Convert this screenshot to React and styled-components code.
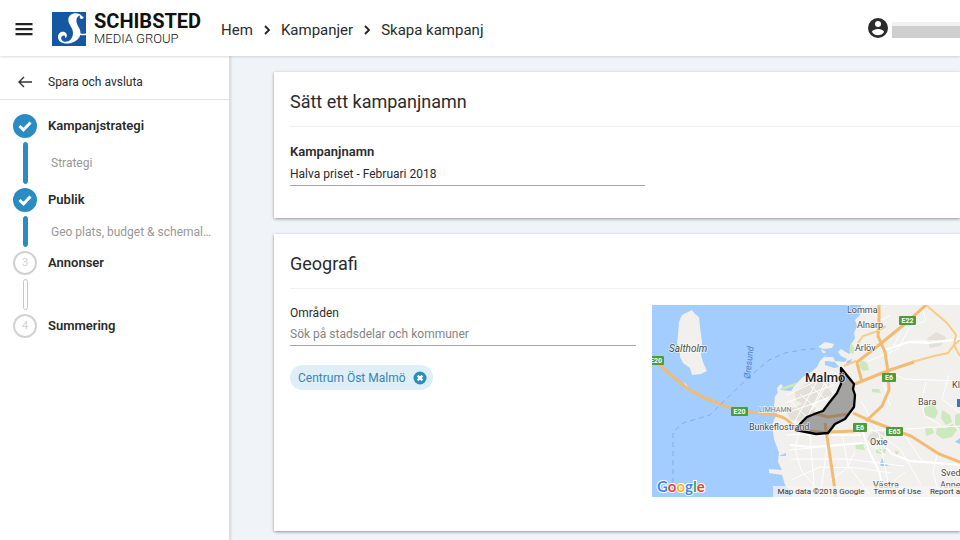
import React, { useState } from "react";
import styled, { createGlobalStyle } from "styled-components";

const Global = createGlobalStyle`
  * { box-sizing: border-box; }
  body { margin: 0; background: #f0f4f8; color: #2b2b2b; font: 12px/16px Roboto, "Liberation Sans", sans-serif; }
  button, input { font: inherit; color: inherit; }
  a { color: inherit; text-decoration: none; }
`;

const Page = styled.div`
  min-height: 100vh;
  display: flex;
  flex-direction: column;
  overflow-x: hidden;
`;

const TopBar = styled.header`
  height: 56px;
  flex: none;
  display: flex;
  align-items: center;
  background: #fff;
  padding-left: 12px;
  box-shadow: 0 1px 2px rgba(0, 0, 0, 0.14);
  z-index: 2;
`;

const IconButton = styled.button`
  display: flex;
  padding: 0;
  border: 0;
  background: none;
  cursor: pointer;
`;

const Brand = styled.a`
  display: flex;
  align-items: center;
  gap: 8px;
  margin-left: 16px;
  padding-top: 2px;
`;

const BrandText = styled.span`
  display: flex;
  flex-direction: column;
  color: #111;
`;

const BrandName = styled.strong`
  font-size: 20px;
  line-height: 20px;
  font-weight: 700;
`;

const BrandSub = styled.span`
  font-size: 13px;
  line-height: 16px;
  font-weight: 300;
`;

const Crumbs = styled.nav`
  display: flex;
  align-items: center;
  gap: 10px;
  margin-left: 20px;
  padding-top: 4px;
  font-size: 15px;
  line-height: 20px;
`;

const Account = styled.div`
  display: flex;
  align-items: center;
  gap: 4px;
  margin-left: auto;
`;

const NameMask = styled.span`
  width: 68px;
  height: 16px;
  margin-top: 3px;
  border-top: 4px solid #f1f1f1;
  background: #cfcfcf;
`;

const Body = styled.div`
  display: flex;
  flex: 1;
`;

const Sidebar = styled.aside`
  width: 230px;
  flex: none;
  background: #fff;
  border-right: 1px solid #dcdfe2;
  box-shadow: 1px 0 2px rgba(0, 0, 0, 0.12);
`;

const SaveButton = styled.button`
  display: flex;
  align-items: center;
  gap: 12px;
  width: 100%;
  height: 44px;
  padding: 8px 14px 0 14px;
  border: 0;
  border-bottom: 1px solid #e3e3e3;
  background: none;
  cursor: pointer;
`;

const Steps = styled.ol`
  list-style: none;
  margin: 0;
  padding: 14px 12px 0 13px;
`;

const Step = styled.li`
  display: grid;
  grid-template-columns: 24px minmax(0, 1fr);
  column-gap: 11px;
  align-items: center;
`;

const Marker = styled.span`
  display: flex;
  align-items: center;
  justify-content: center;
  width: 24px;
  height: 24px;
  border-radius: 50%;
  border: 2px solid ${(p) => (p.$done ? "#2a8cc0" : "#d2d2d2")};
  background: ${(p) => (p.$done ? "#2a8cc0" : "#fff")};
  color: #d2d2d2;
  font-size: 11px;
`;

const StepTitle = styled.span`
  font-size: 13px;
  font-weight: 600;
`;

const Connector = styled.span`
  justify-self: center;
  width: 5px;
  height: ${(p) => (p.$long ? "42px" : "31px")};
  margin: 4px 0;
  border-radius: 3px;
  border: 1px solid ${(p) => (p.$done ? "#2a8cc0" : "#c8c8c8")};
  background: ${(p) => (p.$done ? "#2a8cc0" : "#fff")};
`;

const StepDetail = styled.a`
  padding-left: 3px;
  color: #979797;
  white-space: nowrap;
  overflow: hidden;
  text-overflow: ellipsis;
`;

const Main = styled.main`
  flex: 1;
  min-width: 0;
  display: flex;
  flex-direction: column;
  gap: 16px;
  padding: 16px 0 10px 44px;
`;

const Card = styled.section`
  background: #fff;
  padding: 16px 0 32px 16px;
  box-shadow: 0 1px 3px rgba(0, 0, 0, 0.4);
`;

const CardTitle = styled.h2`
  margin: 0 0 16px;
  padding-bottom: 10px;
  border-bottom: 1px solid #f0f0f0;
  font-size: 18px;
  line-height: 28px;
  font-weight: 400;
`;

const Columns = styled.div`
  display: grid;
  grid-template-columns: minmax(0, 9fr) minmax(0, 8fr);
  gap: 16px;
`;

const NameField = styled.div`
  width: 53%;
`;

const Label = styled.label`
  display: block;
  line-height: 17px;
  font-size: ${(p) => (p.$strong ? "13px" : "12px")};
  font-weight: ${(p) => (p.$strong ? 600 : 400)};
  margin-bottom: ${(p) => (p.$strong ? "2px" : "0")};
`;

const TextInput = styled.input`
  display: block;
  width: 100%;
  height: 24px;
  padding: 0;
  border: 0;
  border-bottom: 1px solid #a5a5a5;
  border-radius: 0;
  background: none;
  outline: none;
  &::placeholder { color: #858585; opacity: 1; }
`;

const Chip = styled.span`
  display: inline-flex;
  align-items: center;
  gap: 7px;
  height: 25px;
  margin-top: 19px;
  padding: 0 6px 0 8px;
  border-radius: 13px;
  background: #dfeff7;
  color: #3a83b4;
`;

const MapFrame = styled.div`
  position: relative;
  height: 192px;
  margin-bottom: 2px;
  overflow: hidden;
  background: #a3ccff;
`;

const MapDrawing = styled.svg`
  display: block;
  width: 100%;
  height: 100%;
  font-family: Roboto, sans-serif;
`;

const Attribution = styled.div`
  position: absolute;
  right: 0;
  bottom: 0;
  display: flex;
  gap: 9px;
  padding-left: 4px;
  background: rgba(245, 245, 245, 0.75);
  color: #333;
  font-size: 8px;
  line-height: 11px;
  white-space: nowrap;
`;

const MenuIcon = () => (
  <svg width="24" height="24" fill="#222" aria-hidden="true">
    <path d="M3.500 7h17v2.200h-17zM3.500 12h17v2.200h-17zM3.500 17h17v2.200h-17z" />
  </svg>
);

const Logo = () => (
  <svg width="34" height="34" viewBox="0 0 34 34" aria-hidden="true">
    <path fill="#1557a0" d="M0 0h34v34H0z" />
    <path fill="#fff" d="M30.500 4.500C28 1.500 24.500.8 21.500 1.600c-3.600 1-5.600 3.900-5.100 7.300.6 4.100 4.600 7 4.600 12 0 4.100-2.400 7.900-5.800 8.700-3 .7-6.200-1-6-3.700.1-1.800 1.700-2.900 3.100-2.300 1.200.5 1.300 1.900.6 2.700 1.900-.5 2.600-2.900 1.400-4.800-2.100-3-8.300-1.900-8.300 3.500 0 4.500 4.500 7 10 6.500 6.300-.6 11-3.900 12.200-8.500 2 .5 3.700.4 5.800 0v-1.400c-1.900.4-3.700.3-5.500-.1.500-5.100-4.100-8.300-4.100-12.800 0-3.300 1.800-5.300 4-5.300-1 1-.9 2.800.4 3.400 1.500.7 2.800-.5 2.700-2.100z" />
  </svg>
);

const Chevron = () => (
  <svg width="8" height="12" viewBox="0 0 8 12" fill="none" stroke="#222" strokeWidth="1.800" aria-hidden="true">
    <path d="M2 2l4 4-4 4" />
  </svg>
);

const UserIcon = () => (
  <svg width="20" height="20" viewBox="2 2 20 20" fill="#2b2b2b" aria-hidden="true">
    <path d="M12 2a10 10 0 1 0 0 20 10 10 0 0 0 0-20zm0 3a3 3 0 1 1 0 6 3 3 0 0 1 0-6zm0 14.200a7.200 7.200 0 0 1-6-3.220c.03-1.990 4-3.080 6-3.080s5.970 1.090 6 3.080a7.200 7.200 0 0 1-6 3.220z" />
  </svg>
);

const BackIcon = () => (
  <svg width="22" height="16" viewBox="0 0 22 16" fill="none" stroke="#333" strokeWidth="1.400" aria-hidden="true">
    <path d="M18 8H5M10 3L5 8l5 5" />
  </svg>
);

const Check = () => (
  <svg width="16" height="14" viewBox="0 0 16 14" fill="none" stroke="#fff" strokeWidth="3" aria-hidden="true">
    <path d="M2.500 7l4 3.800L13.500 3.500" />
  </svg>
);

const RemoveIcon = () => (
  <svg width="14" height="14" viewBox="0 0 14 14" aria-hidden="true">
    <circle cx="7" cy="7" r="6.500" fill="#2a8cc0" />
    <path d="M4.600 4.600l4.800 4.800M9.400 4.600L4.600 9.400" stroke="#fff" strokeWidth="2.300" />
  </svg>
);

const steps = [
  { title: "Kampanjstrategi", detail: "Strategi", done: true, long: true },
  { title: "Publik", detail: "Geo plats, budget & schemaläggning", done: true },
  { title: "Annonser" },
  { title: "Summering" },
];

const shields = [
  { x: 648, y: 356, w: 16, name: "E20" },
  { x: 731, y: 407, w: 17, name: "E20" },
  { x: 899, y: 316, w: 17, name: "E22" },
  { x: 882, y: 373, w: 14, name: "E6" },
  { x: 853, y: 423, w: 14, name: "E6" },
  { x: 886, y: 427, w: 17, name: "E65" },
];

const places = [
  { x: 847, y: 313, name: "Lomma" },
  { x: 857, y: 328, name: "Alnarp" },
  { x: 855, y: 351, name: "Arlöv" },
  { x: 749, y: 430, name: "Bunkeflostrand" },
  { x: 870, y: 445, name: "Oxie" },
  { x: 918, y: 405, name: "Bara" },
  { x: 952, y: 388, name: "Klågerup" },
  { x: 941, y: 476, name: "Svedala" },
  { x: 940, y: 488, name: "Anneberg" },
  { x: 873, y: 488, name: "Västra" },
];

const letters = [
  ["G", "#4285f4"],
  ["o", "#ea4335"],
  ["o", "#fbbc05"],
  ["g", "#4285f4"],
  ["l", "#34a853"],
  ["e", "#ea4335"],
];

const RegionMap = () => (
  <MapDrawing viewBox="652 305 308 192" preserveAspectRatio="xMinYMid slice" role="img" aria-label="Karta över Malmö">
    <path fill="#a3ccff" d="M652 305h308v192H652z" />
    <path fill="#f1f0ec" d="M692 310l3 4 4 3 1 10 2 15-1 13 2 7 4 9-6 3-9 1-2-7-7-5-3-6 0-8-3-6 1-8 1-13 3-7z" />
    <path fill="#f1f0ec" d="M684 382l6 7 4 2-2 1-6-3z" />
    <path fill="#f1f0ec" d="M861 305l-1 10-5 5 2 6-3 7 1 5-5 8 2 5-3 3-8-5-3 3 3 4 6 3-2 3-10-1-2-4-7 0 0-5-5-3 3 8-4 4-3 6-6 5-8 5-8 8-4 6-10-1-6 6-1 10 3 7-5 12 2 14 5 14-1 9 4 8-13-1v4l13 2 3 10 6 7 5 14h180V305z" />
    <g fill="#a3ccff">
      <path d="M816 351l8 2 6-2 1 3-7 3-8-1zM825 361l10 1 4 5-5 1-9-3zM839 342l5 4 7 1-4 3-7-3zM847 361l5-2-2 5-4 1zM779 456l7-3v3zM880 464l2-6 3 5 4 3h-8zM955 442l5-4v6z" />
    </g>
    <g fill="#f1f0ec">
      <path d="M818 347l7-5 9 2-2 4-8 1zM777 388l4-4 2 2-5 9z" />
    </g>
    <g fill="#cce8bd">
      <path d="M851 342l4 8-2 4-4-2zM861 361l6 1 2 8-6 1-4-5zM783 387l15-5-5 5-11 3zM814 388l7 3-1 4-6-2zM872 389l7 0 2 4-9-1zM855 444l8 0 2 6-9-1zM876 449h11l-3 5-8-1zM924 408l10-4 4 8-3 7-11-4zM942 410l8 5 2 7-6 3-5-7zM937 427l8 1 8-4 4 6-5 7-9 2-7-5zM925 428h7l2 5-8 3zM895 450l4 2-3 4zM955 415l5-2v16l-5-4z" />
    </g>
    <g fill="#e2e0d8">
      <path d="M869 435l7-5 9 3-3 9-8 2-7-5zM927 339l9-7 10 5-5 9-11 2zM786 411l18-8 12 4-8 15-17-2zM795 391l14-9 20 0 3 13-24 10-12-4z" />
    </g>
    <g fill="none" stroke="#fff" strokeWidth="1">
      <path d="M785 403l49-18M789 412l48-17M787 395l40-19M794 423l27-49M803 425l25-48M812 410l19-33M786 435l175-9M789 450l80-7 16 12M791 459h55l58 7M810 433l5 64M829 434l-9 63M842 434l6 31 24 32M799 433l-4 15 6 22 16 19M890 406l-7-25 6-26 16-32M866 362l32-13 12-22 15-6M884 369l20 10 56 2M892 347l20-6 48 0M906 437l16 24 38 4M861 401l18 32 5 29 7 35M863 424l15 9 23 17 20 35M926 382l-5 20 4 14 16 9M949 375l-7 24 18 14M791 480l29-13 38 1 33 5" />
      <path d="M791 402l17 16M800 394l20 17M811 386l20 19M821 381l16 15M855 452l-9 17-15 11M905 472l-11 9-6 16M937 455l-4 17 7 25M922 307l4 14M871 311l10 9 10-5" />
    </g>
    <g fill="none" stroke="#fff" strokeWidth="2">
      <path d="M807 435h54M862 429l7 22 10 20 6 26M877 438l15 16 18 7 50 4M884 350l25-8 20 1 31-4M790 445l20 2 53-4" />
    </g>
    <g fill="none" stroke="#f8cd83" strokeWidth="2">
      <path d="M926 305l21 18 9 12-2 10 6 11M912 362l22-6 14-3 6-8 6-5M858 343l5-7 15-5 8-5M844 366l12-5" />
    </g>
    <g fill="none" stroke="#f3ba72" strokeWidth="3">
      <path d="M652 359c20 15 32 32 61 42 18 8 29 11 48 12 14 2 25 1 35 17M926 305l-20 18-27 22-23 18M879 305v19l-1 12 7 16 3 20 1 18-7 16-16 15M855 384l32-13 27-9M829 432l25-1 10-4M853 413l18 8 40 15 28 18 21 8M825 423l3 20 4 27 4 27M857 363l5 19M800 430l29 3M813 413l15 4 20-3" />
    </g>
    <g fill="none" stroke="#82aee8" strokeWidth="1" strokeDasharray="5 4">
      <path d="M673 492v-60l10-9 27-8 15-15 22-21 22-19 16-7 22-4 9 0" />
    </g>
    <path d="M841 368l13 16-1 5 2 6-1 12-9 12-10 5-7 9-12 1-20-4 5-7 6-6 10-4 6-2 6-8 8-10 4-9z" fill="#555" fillOpacity="0.500" stroke="#000" strokeWidth="2.300" strokeLinejoin="round" />
    {shields.map((s) => (
      <g key={s.x}>
        <rect x={s.x} y={s.y} width={s.w} height="9" rx="1" fill="#4d9c3b" />
        <text x={s.x + s.w / 2} y={s.y + 7} textAnchor="middle" fill="#fff" fontSize="7" fontWeight="700">{s.name}</text>
      </g>
    ))}
    <path fill="#3374cf" d="M957 399h3v8h-3z" />
    <g fill="#4b4b4b" stroke="#fff" strokeOpacity="0.700" strokeWidth="1.500" paintOrder="stroke" fontSize="9">
      {places.map((p) => <text key={p.name} x={p.x} y={p.y}>{p.name}</text>)}
      <text x="759" y="412" fontSize="7" fill="#777">LIMHAMN</text>
      <text x="669" y="352" fontSize="10" fontStyle="italic">Saltholm</text>
      <text x="805" y="382" fontSize="13" fontWeight="500" fill="#222">Malmö</text>
    </g>
    <text transform="translate(750 379) rotate(-84)" fill="#4f83c8" fontSize="9" fontStyle="italic">Øresund</text>
    <text x="657" y="492" fontSize="15" fontFamily="Lato, sans-serif" fontWeight="700" stroke="#fff" strokeWidth="2" paintOrder="stroke">
      {letters.map(([l, c], i) => <tspan key={i} fill={c}>{l}</tspan>)}
    </text>
  </MapDrawing>
);

export default function App() {
  const [name, setName] = useState("Halva priset - Februari 2018");
  const [query, setQuery] = useState("");
  return (
    <Page>
      <Global />
      <TopBar>
        <IconButton aria-label="Meny"><MenuIcon /></IconButton>
        <Brand href="#">
          <Logo />
          <BrandText>
            <BrandName>SCHIBSTED</BrandName>
            <BrandSub>MEDIA GROUP</BrandSub>
          </BrandText>
        </Brand>
        <Crumbs aria-label="Sökväg">
          <a href="#">Hem</a>
          <Chevron />
          <a href="#">Kampanjer</a>
          <Chevron />
          <a href="#">Skapa kampanj</a>
        </Crumbs>
        <Account>
          <IconButton aria-label="Konto"><UserIcon /></IconButton>
          <NameMask />
        </Account>
      </TopBar>
      <Body>
        <Sidebar>
          <SaveButton><BackIcon />Spara och avsluta</SaveButton>
          <Steps>
            {steps.map((s, i) => (
              <Step key={s.title}>
                <Marker $done={s.done}>{s.done ? <Check /> : i + 1}</Marker>
                <StepTitle>{s.title}</StepTitle>
                {i < steps.length - 1 && <Connector $done={s.done} $long={s.long} />}
                {s.detail && <StepDetail href="#">{s.detail}</StepDetail>}
              </Step>
            ))}
          </Steps>
        </Sidebar>
        <Main>
          <Card>
            <CardTitle>Sätt ett kampanjnamn</CardTitle>
            <NameField>
              <Label htmlFor="name" $strong>Kampanjnamn</Label>
              <TextInput id="name" value={name} onChange={(e) => setName(e.target.value)} />
            </NameField>
          </Card>
          <Card>
            <CardTitle>Geografi</CardTitle>
            <Columns>
              <div>
                <Label htmlFor="areas">Områden</Label>
                <TextInput id="areas" placeholder="Sök på stadsdelar och kommuner" value={query} onChange={(e) => setQuery(e.target.value)} />
                <Chip>
                  Centrum Öst Malmö
                  <IconButton aria-label="Ta bort Centrum Öst Malmö"><RemoveIcon /></IconButton>
                </Chip>
              </div>
              <MapFrame>
                <RegionMap />
                <Attribution>
                  <span>Map data ©2018 Google</span>
                  <a href="#">Terms of Use</a>
                  <a href="#">Report a</a>
                </Attribution>
              </MapFrame>
            </Columns>
          </Card>
        </Main>
      </Body>
    </Page>
  );
}
